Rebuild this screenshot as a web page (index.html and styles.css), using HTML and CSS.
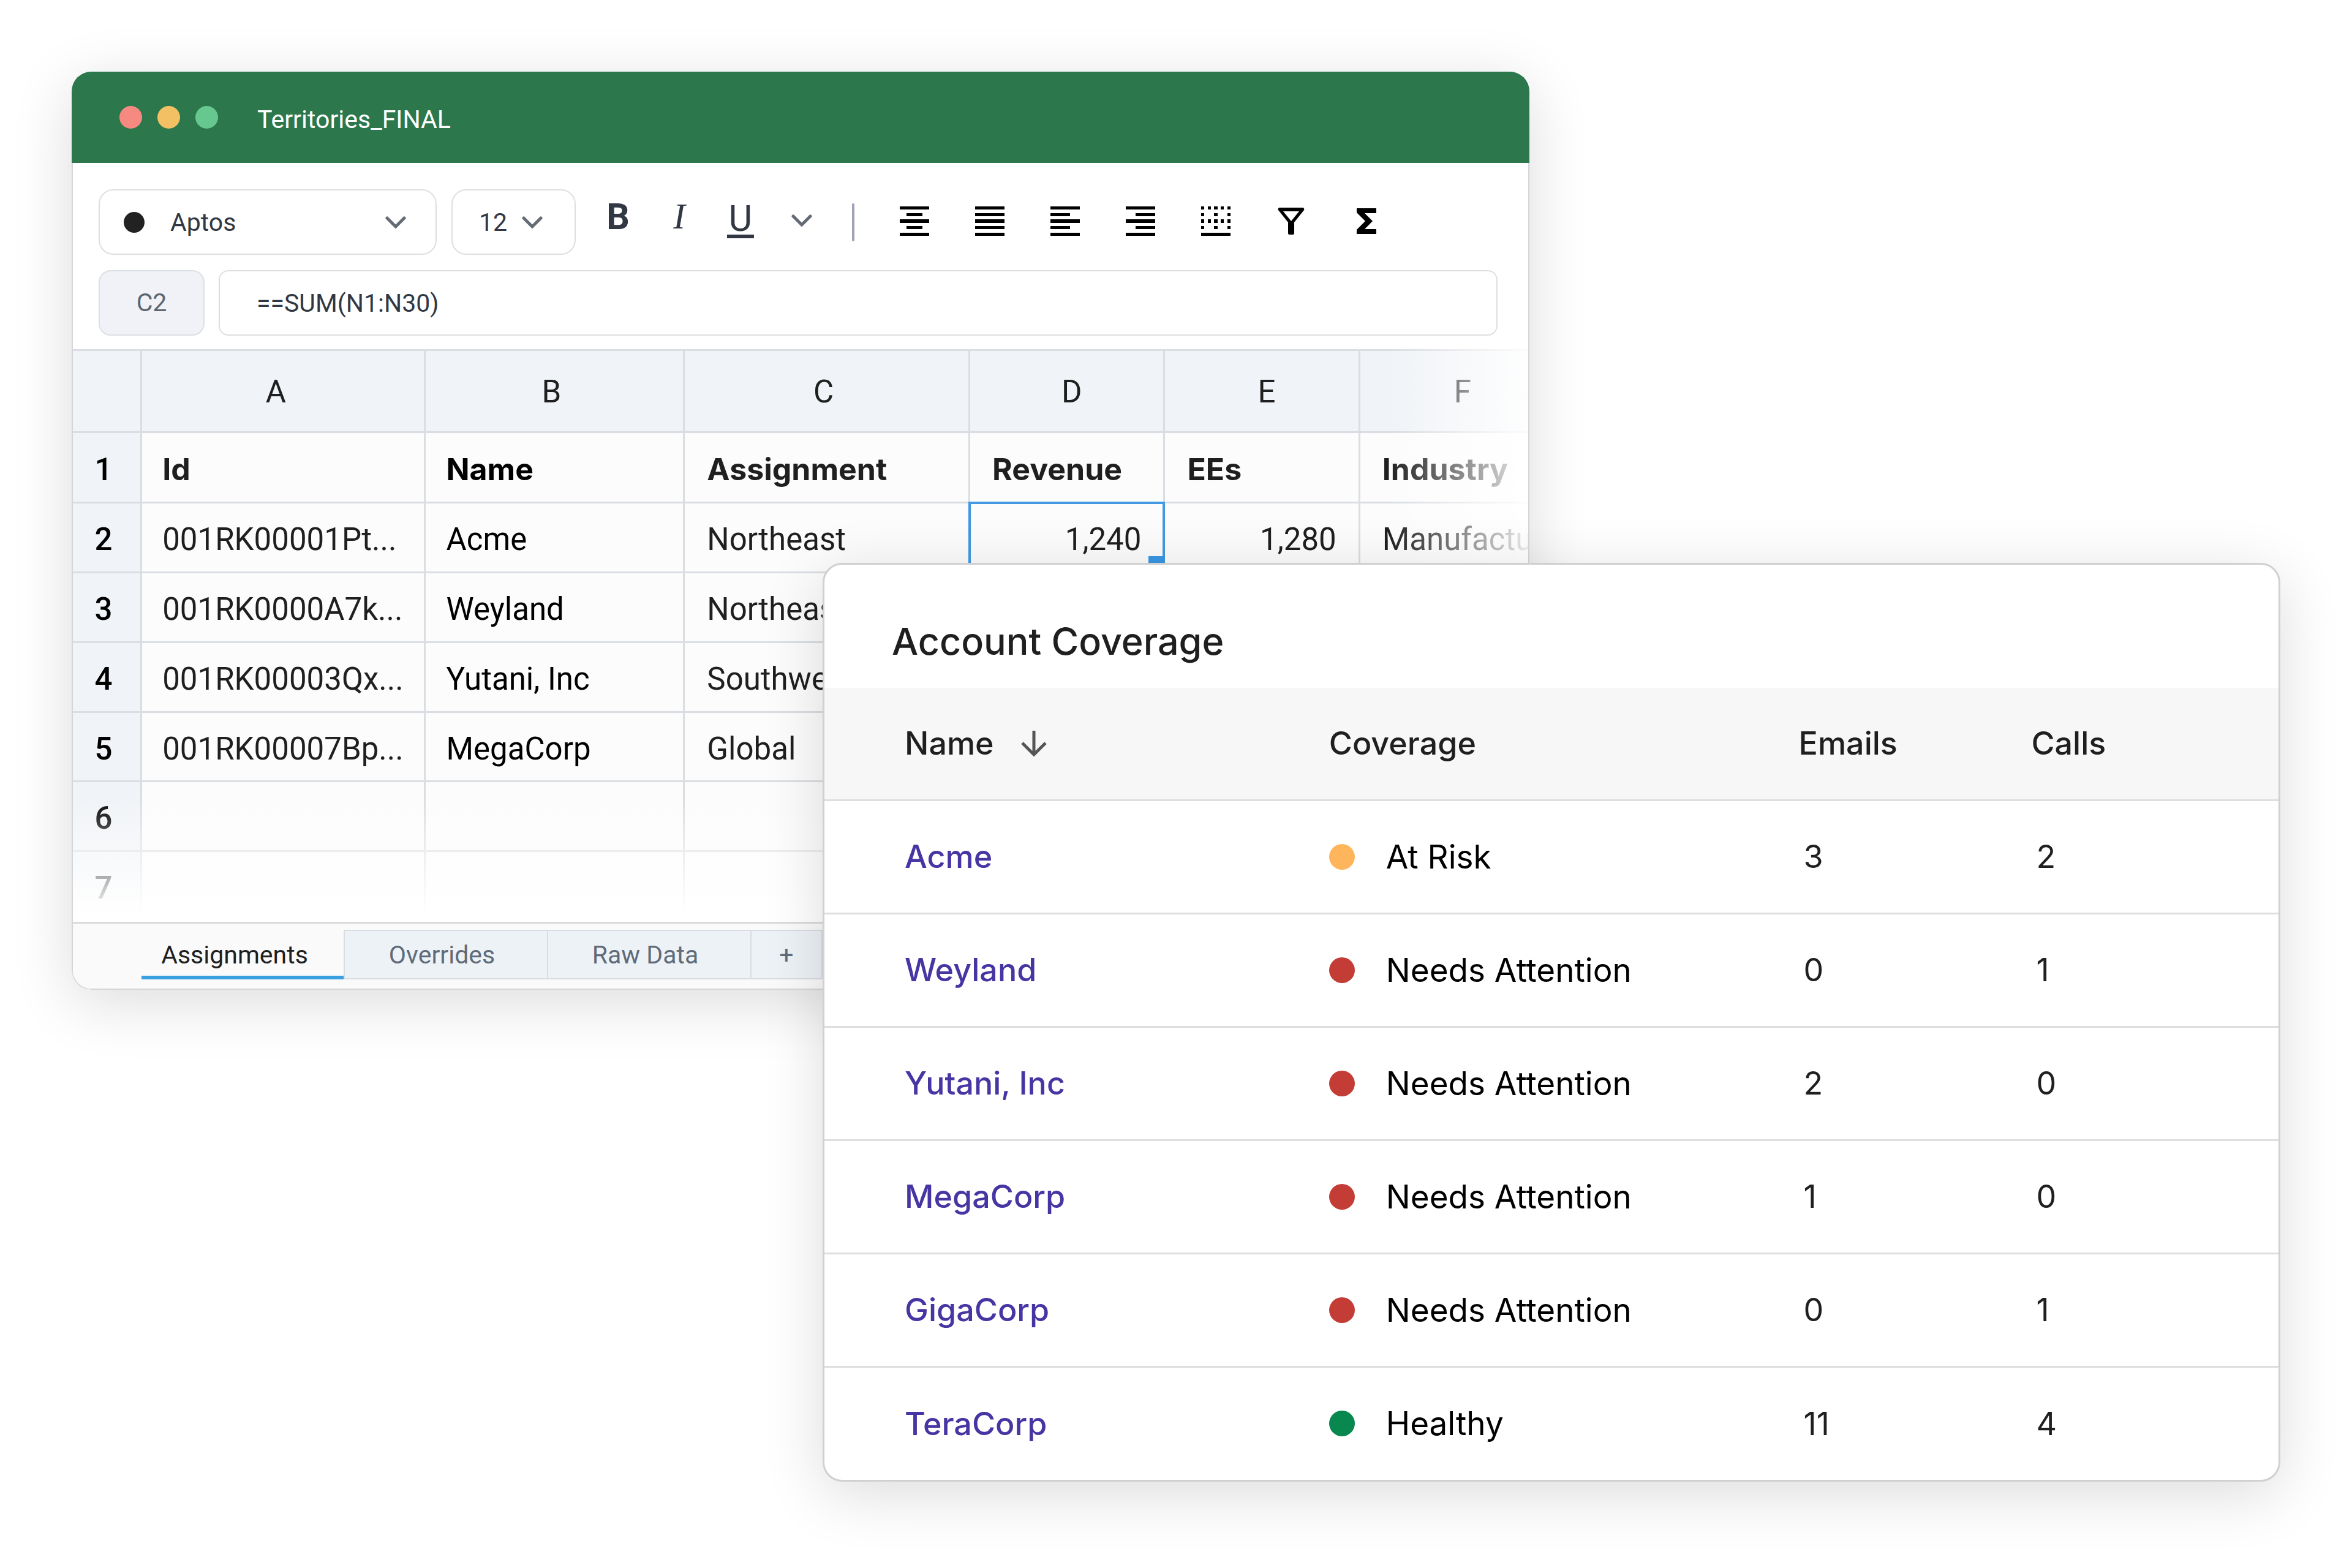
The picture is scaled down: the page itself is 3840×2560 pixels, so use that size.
FILE: index.html
```html
<!DOCTYPE html>
<html lang="en">
<head>
  <meta charset="UTF-8">
  <meta name="viewport" content="width=device-width, initial-scale=1.0">
  <title>Account Coverage</title>
  <link rel="stylesheet" href="styles.css">
</head>
<body>
  <main class="stage">

    <!-- spreadsheet window -->
    <section class="sheet">
      <header class="titlebar">
        <div class="lights">
          <span class="light red"></span>
          <span class="light yellow"></span>
          <span class="light green"></span>
        </div>
        <h1 class="file-name">Territories_FINAL</h1>
      </header>

      <div class="sheet-body">
        <div class="toolbar">
          <div class="tools">
            <label class="picker font-picker">
              <span class="font-dot"></span>
              <select aria-label="Font">
                <option>Aptos</option>
              </select>
              <svg class="chevron" viewBox="0 0 34 20"><path d="M3 3l14 14L31 3"/></svg>
            </label>
            <label class="picker size-picker">
              <select aria-label="Font size">
                <option>12</option>
              </select>
              <svg class="chevron" viewBox="0 0 34 20"><path d="M3 3l14 14L31 3"/></svg>
            </label>

            <div class="format">
              <button class="letter bold" aria-label="Bold">B</button>
              <button class="letter italic" aria-label="Italic">I</button>
              <button class="letter underline" aria-label="Underline"><span>U</span></button>
              <button class="letter" aria-label="More formats">
                <svg class="chevron" viewBox="0 0 34 20"><path d="M3 3l14 14L31 3"/></svg>
              </button>
            </div>
            <span class="divider"></span>
            <div class="icons">
              <button aria-label="Align center">
                <svg viewBox="0 0 48 48"><path d="M0 0h48v5H0zM11 11h26v5H11zM0 21h48v6H0zM11 32h26v5H11zM0 43h48v5H0z"/></svg>
              </button>
              <button aria-label="Justify">
                <svg viewBox="0 0 48 48"><path d="M0 0h48v5H0zM0 11h48v5H0zM0 21h48v6H0zM0 32h48v5H0zM0 43h48v5H0z"/></svg>
              </button>
              <button aria-label="Align left">
                <svg viewBox="0 0 48 48"><path d="M0 0h48v5H0zM0 11h32v5H0zM0 21h48v6H0zM0 32h32v5H0zM0 43h48v5H0z"/></svg>
              </button>
              <button aria-label="Align right">
                <svg viewBox="0 0 48 48"><path d="M0 0h48v5H0zM16 11h32v5H16zM0 21h48v6H0zM16 32h32v5H16zM0 43h48v5H0z"/></svg>
              </button>
              <button aria-label="Borders">
                <svg viewBox="0 0 48 48"><path d="M0 0h5v5H0zM11 0h5v5h-5zM21 0h6v5h-6zM32 0h5v5h-5zM43 0h5v5h-5zM0 11h5v5H0zM21 11h6v5h-6zM43 11h5v5h-5zM0 21h5v6H0zM11 21h5v6h-5zM21 21h6v6h-6zM32 21h5v6h-5zM43 21h5v6h-5zM0 32h5v5H0zM21 32h6v5h-6zM43 32h5v5h-5zM0 43h48v5H0z"/></svg>
              </button>
              <button aria-label="Filter">
                <svg viewBox="0 0 48 48"><path fill-rule="evenodd" d="M5 2h38c2 0 3 3 2 4L29 26v18q0 2-2 2h-6q-2 0-2-2V26L3 6C2 5 3 2 5 2zM11 8l13 16L37 8z"/></svg>
              </button>
              <button aria-label="Sum">
                <svg viewBox="0 0 48 48"><path d="M8 3h32v8H21l13 13-13 13h19v8H8v-7l14-14L8 10z"/></svg>
              </button>
            </div>
          </div>

          <div class="formula-row">
            <span class="cell-ref">C2</span>
            <input class="formula" type="text" aria-label="Formula" value="==SUM(N1:N30)">
          </div>
        </div>

        <div class="grid">
          <table class="cells">
            <colgroup>
              <col class="col-num"><col class="col-a"><col class="col-b"><col class="col-c"><col class="col-d"><col class="col-e"><col>
            </colgroup>
            <thead>
              <tr><th></th><th class="narrow">A</th><th>B</th><th>C</th><th class="wide">D</th><th class="wide">E</th><th class="cut">F</th></tr>
            </thead>
            <tbody>
              <tr class="fields"><th>1</th><td>Id</td><td>Name</td><td>Assignment</td><td>Revenue</td><td>EEs</td><td>Industry</td></tr>
              <tr><th>2</th><td>001RK00001Pt...</td><td>Acme</td><td>Northeast</td><td class="num selected">1,240</td><td class="num">1,280</td><td>Manufacturing</td></tr>
              <tr><th>3</th><td>001RK0000A7k...</td><td>Weyland</td><td>Northeast</td><td></td><td></td><td></td></tr>
              <tr><th>4</th><td>001RK00003Qx...</td><td>Yutani, Inc</td><td>Southwest</td><td></td><td></td><td></td></tr>
              <tr><th>5</th><td>001RK00007Bp...</td><td>MegaCorp</td><td>Global</td><td></td><td></td><td></td></tr>
              <tr><th>6</th><td></td><td></td><td></td><td></td><td></td><td></td></tr>
              <tr><th>7</th><td></td><td></td><td></td><td></td><td></td><td></td></tr>
            </tbody>
          </table>
        </div>

        <nav class="tabs">
          <button class="tab active">Assignments</button>
          <button class="tab">Overrides</button>
          <button class="tab">Raw Data</button>
          <button class="tab add" aria-label="Add sheet">+</button>
        </nav>
      </div>
    </section>

    <!-- coverage card -->
    <section class="coverage">
      <h2 class="coverage-title">Account Coverage</h2>
      <table class="accounts">
        <colgroup>
          <col class="col-name"><col class="col-coverage"><col class="col-emails"><col>
        </colgroup>
        <thead>
          <tr>
            <th>
              <button class="sort">Name
                <svg viewBox="0 0 42 42"><path d="M21 0v39M2 20l19 19 19-19"/></svg>
              </button>
            </th>
            <th>Coverage</th><th>Emails</th><th>Calls</th>
          </tr>
        </thead>
        <tbody>
          <tr><td><a href="#">Acme</a></td><td><span class="status risk">At Risk</span></td><td>3</td><td>2</td></tr>
          <tr><td><a href="#">Weyland</a></td><td><span class="status attention">Needs Attention</span></td><td>0</td><td>1</td></tr>
          <tr><td><a href="#">Yutani, Inc</a></td><td><span class="status attention">Needs Attention</span></td><td>2</td><td>0</td></tr>
          <tr><td><a href="#">MegaCorp</a></td><td><span class="status attention">Needs Attention</span></td><td>1</td><td>0</td></tr>
          <tr><td><a href="#">GigaCorp</a></td><td><span class="status attention">Needs Attention</span></td><td>0</td><td>1</td></tr>
          <tr><td><a href="#">TeraCorp</a></td><td><span class="status healthy">Healthy</span></td><td>11</td><td>4</td></tr>
        </tbody>
      </table>
    </section>

  </main>
</body>
</html>
```
FILE: styles.css
```css
* {
  box-sizing: border-box;
}
body {
  margin: 0;
  background-color: #fff;
  color: #1f1f1f;
  font-family: Roboto, "Liberation Sans", sans-serif;
}
button, select, input {
  font: inherit;
  color: inherit;
  border: none;
  background: none;
  padding: 0;
  margin: 0;
}
button {
  cursor: pointer;
}
svg {
  display: block;
}
table {
  border-collapse: collapse;
  table-layout: fixed;
  width: 100%;
}

/* both windows share one grid cell and overlap */
.stage {
  display: grid;
  align-items: start;
  padding: 117px 117px 140px 117px;
}
.sheet,
.coverage {
  grid-area: 1 / 1;
  width: 66%;
  border-radius: 32px;
  overflow: hidden;
  background-color: #fff;
  box-shadow: 0 20px 100px rgba(0, 0, 0, 0.14);
}

/* spreadsheet */
.titlebar {
  display: flex;
  align-items: center;
  gap: 64px;
  height: 149px;
  padding: 0 78px;
  background-color: #2c784c;
  color: #fff;
}
.lights {
  display: flex;
  gap: 25px;
}
.light {
  width: 37px;
  height: 37px;
  border-radius: 50%;
}
.red {
  background-color: #f68a80;
}
.yellow {
  background-color: #f3c063;
}
.green {
  background-color: #66c88e;
}
.file-name {
  margin: 0;
  padding-top: 6px;
  font-size: 41px;
  font-weight: 400;
}
.sheet-body {
  border: 2px solid #d4d6d8;
  border-top: none;
  border-radius: 0 0 32px 32px;
}
.toolbar {
  padding: 43px 50px 22px 42px;
  font-size: 41px;
  color: #313843;
}
.tools {
  display: flex;
  align-items: center;
  margin-bottom: 25px;
}
.picker {
  display: flex;
  align-items: center;
  height: 107px;
  border: 2px solid #dcdfe1;
  border-radius: 24px;
}
.picker select {
  flex: 1;
  min-width: 0;
  appearance: none;
}
.font-picker {
  width: 552px;
  padding: 0 48px 0 39px;
  margin-right: 24px;
}
.size-picker {
  width: 203px;
  padding: 0 52px 0 43px;
}
.font-dot {
  width: 34px;
  height: 34px;
  margin-right: 42px;
  border-radius: 50%;
  background-color: #222;
}
.chevron {
  width: 34px;
  height: 20px;
  fill: none;
  stroke: #646b75;
  stroke-width: 5;
  stroke-linecap: round;
}
.format {
  display: flex;
  align-items: center;
  gap: 40px;
  margin-left: 39px;
}
.letter {
  display: flex;
  align-items: center;
  justify-content: center;
  width: 60px;
  height: 80px;
  padding-bottom: 6px;
  font-size: 59px;
  line-height: 59px;
}
.bold,
.italic {
  padding-bottom: 18px;
}
.bold {
  font-weight: 700;
}
.italic {
  font-family: "Liberation Serif", serif;
  font-style: italic;
}
.underline span {
  height: 58px;
  padding: 0 3px;
  line-height: 52px;
  border-bottom: 6px solid #313843;
}
.divider {
  width: 4px;
  height: 62px;
  margin: 0 74px 0 52px;
  border-radius: 2px;
  background-color: #a0a2b8;
}
.icons {
  display: flex;
  gap: 75px;
  padding-bottom: 4px;
}
.icons svg {
  width: 48px;
  height: 48px;
  fill: #000;
}
.formula-row {
  display: flex;
  gap: 23px;
}
.cell-ref {
  width: 173px;
  line-height: 103px;
  text-align: center;
  color: #5c6671;
  background-color: #f0f2f7;
  border: 2px solid #dcdfe3;
  border-radius: 20px;
}
.formula {
  flex: 1;
  min-width: 0;
  padding: 0 60px;
  border: 2px solid #dcdfe1;
  border-radius: 16px;
}

/* cells, fading out to the right and bottom */
.grid {
  position: relative;
  overflow: hidden;
}
.grid::before,
.grid::after {
  content: "";
  position: absolute;
  right: 0;
  bottom: 0;
  z-index: 1;
}
.grid::before {
  top: 0;
  width: 228px;
  background: linear-gradient(to right, rgba(255, 255, 255, 0), rgba(255, 255, 255, 0.92));
}
.grid::after {
  left: 0;
  height: 206px;
  background: linear-gradient(rgba(255, 255, 255, 0), #fff 94%);
}
.cells {
  height: 935px;
  font-size: 51px;
}
.col-num {
  width: 4.7%;
}
.col-a {
  width: 19.5%;
}
.col-b {
  width: 17.8%;
}
.col-c {
  width: 19.6%;
}
.col-d,
.col-e {
  width: 13.4%;
}
.cells th,
.cells td {
  padding: 6px 36px 0 36px;
  border: 3px solid #dadde1;
  font-weight: 400;
  text-align: left;
  white-space: nowrap;
}
.cells td {
  background-color: #fcfcfc;
}
.cells th {
  padding: 6px 10px 0 0;
  background-color: #f0f3f7;
  text-align: center;
}
.cells th:first-child {
  border-left: none;
  color: #000;
  font-weight: 500;
}
.cells thead tr {
  height: 134px;
}
.cells thead th {
  padding: 2px 10px 0 0;
}
.cells thead .narrow {
  padding-right: 24px;
}
.cells thead .wide {
  padding: 2px 0 0 16px;
}
.cells thead .cut {
  padding: 2px 0 0 60px;
}
.cells tr > :last-child {
  border-right: none;
}
.cells td:nth-child(2),
.cells td:nth-child(3) {
  padding-left: 33px;
}
.cells td:nth-child(3) {
  color: #000;
}
.fields td {
  font-family: Inter, "Liberation Sans", sans-serif;
  font-size: 50px;
  font-weight: 700;
}
.cells .num {
  text-align: right;
}
.selected {
  position: relative;
}
.selected::before {
  content: "";
  position: absolute;
  inset: -3px;
  border: 4px solid #4199e1;
}
.selected::after {
  content: "";
  position: absolute;
  right: -3px;
  bottom: -3px;
  width: 27px;
  height: 28px;
  background-color: #3a96e2;
}
.tabs {
  display: flex;
  height: 109px;
  padding: 10px 0 15px 112px;
  border-top: 3px solid #d8dadd;
  background-color: #fafafa;
  border-radius: 0 0 30px 30px;
  font-size: 41px;
}
.tab {
  width: 332px;
  padding-right: 13px;
  border: 2px solid #d9dde1;
  border-left: none;
  background-color: #edf2f6;
  color: #5f6b7a;
}
.tab.active {
  padding-right: 26px;
  border: none;
  border-right: 2px solid #d9dde1;
  box-shadow: inset 0 -6px #3ba0e0;
  background: none;
  color: #1f1f1f;
}
.tab.add {
  width: 116px;
  padding-right: 0;
}

/* coverage card, on top of the spreadsheet */
.coverage {
  position: relative;
  z-index: 2;
  justify-self: end;
  margin-top: 802px;
  border: 3px solid #d0d0d0;
  font-family: Inter, "Liberation Sans", sans-serif;
}
.coverage-title {
  margin: 0;
  padding: 88px 110px 39px;
  font-size: 61px;
  font-weight: 500;
  line-height: 74px;
}
.accounts {
  font-size: 52px;
}
.col-name {
  width: 34.7%;
}
.col-coverage {
  width: 32.3%;
}
.col-emails {
  width: 16%;
}
.accounts th,
.accounts td {
  height: 185px;
  padding: 0;
  text-align: left;
  border-bottom: 3px solid #dedede;
}
.accounts th {
  height: 183px;
  background-color: #f7f7f7;
  font-weight: 500;
}
.accounts td {
  padding-left: 8px;
}
.accounts td:nth-child(2) {
  padding-left: 0;
  color: #000;
}
.accounts th:first-child,
.accounts td:first-child {
  padding-left: 131px;
}
.accounts tr:last-child td {
  border-bottom: none;
}
.accounts a {
  color: #4635a3;
  font-weight: 500;
  text-decoration: none;
}
.sort {
  display: flex;
  align-items: center;
  gap: 44px;
  font-weight: 500;
}
.sort svg {
  width: 42px;
  height: 42px;
  fill: none;
  stroke: #555;
  stroke-width: 5;
}
.status {
  display: flex;
  align-items: center;
  gap: 51px;
  font-size: 53px;
}
.status::before {
  content: "";
  width: 42px;
  height: 42px;
  border-radius: 50%;
}
.risk::before {
  background-color: #ffb55c;
}
.attention::before {
  background-color: #c33c35;
}
.healthy::before {
  background-color: #08874e;
}
```
